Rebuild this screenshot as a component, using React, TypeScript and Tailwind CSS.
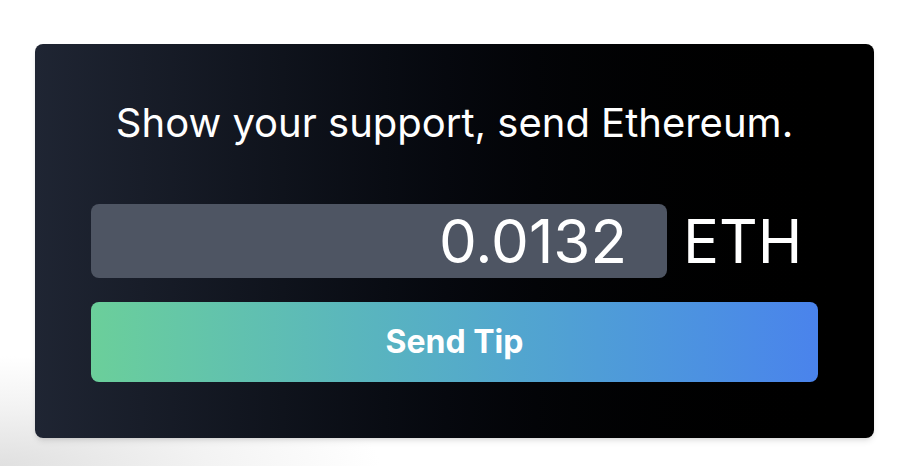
import { useState } from 'react'

export default function App() {
  const [amount, setAmount] = useState('0.0132')

  return (
    <div
      className="min-h-[466px] w-[898px] bg-[radial-gradient(ellipse_380px_110px_at_0%_100%,#e0e0e0_0%,#f3f3f3_55%,#ffffff_100%)] pt-[44px] pl-[35px]"
      style={{ fontFamily: 'Inter, "Liberation Sans", sans-serif' }}
    >
      <TipCard amount={amount} onChange={setAmount} />
    </div>
  )
}

export const TipCard = ({
  amount,
  onChange,
}: {
  amount: string
  onChange: (v: string) => void
}) => {
  return (
    <div className="w-[839px] h-[394px] rounded-lg bg-gradient-to-r from-[#1f2533] to-black shadow-md px-14 pt-[59px] pb-14 flex flex-col">
      <h1 className="text-center text-white text-[40px] leading-10 m-0 font-normal">
        Show your support, send Ethereum.
      </h1>

      <div className="mt-[61px] flex items-center">
        <input
          value={amount}
          onChange={(e) => onChange(e.target.value)}
          className="w-[576px] h-[74px] rounded-lg bg-[#4e5563] text-white text-6xl text-right pr-10 outline-none"
        />
        <span className="ml-4 text-white text-6xl">ETH</span>
      </div>

      <button className="mt-6 h-20 w-full rounded-lg bg-gradient-to-r from-[#6bcf9a] to-[#4a83ec] text-white text-[32px] font-bold">
        Send Tip
      </button>
    </div>
  )
}
